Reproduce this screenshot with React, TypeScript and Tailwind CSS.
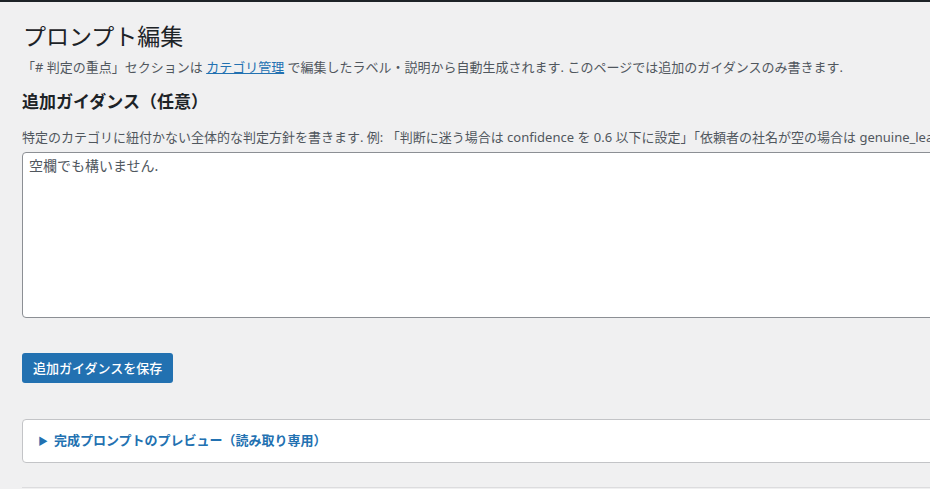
export default function App() {
  return (
    <div
      className="min-h-[489px] bg-[#f0f0f1] text-[#3c434a] overflow-hidden"
      style={{ fontFamily: '"Noto Sans", "Noto Sans CJK JP", sans-serif' }}
    >
      <div className="h-[2px] bg-[#1d2327]" />
      <div className="pl-[22px] w-[1100px]">
        <h1 className="mt-[19px] text-[23px] leading-[30px] font-normal text-[#1d2327] pl-px">プロンプト編集</h1>
        <p className="mt-[6px] text-[13px] leading-[20px] text-[#50575e] whitespace-nowrap">
          「# 判定の重点」セクションは{' '}
          <a href="#" className="text-[#2271b1] underline">
            カテゴリ管理
          </a>{' '}
          で編集したラベル・説明から自動生成されます. このページでは追加のガイダンスのみ書きます.
        </p>
        <h2 className="mt-[14px] text-[17px] leading-[22px] font-semibold text-[#1d2327]">追加ガイダンス（任意）</h2>
        <p className="mt-[14px] text-[13px] leading-[20px] text-[#50575e] whitespace-nowrap">
          特定のカテゴリに紐付かない全体的な判定方針を書きます. 例: 「判断に迷う場合は confidence を 0.6 以下に設定」「依頼者の社名が空の場合は genuine_lead を false にする」
        </p>
        <textarea
          className="mt-[5px] block w-[1000px] h-[166px] bg-white border border-[#8c8f94] rounded-[4px] px-[6px] py-[3px] text-[14px] leading-[20px] text-[#2c3338] placeholder:text-[#50575e] resize-none outline-none"
          placeholder="空欄でも構いません."
        />
        <button className="mt-[35px] h-[30px] px-[11px] rounded-[3px] bg-[#2271b1] text-white text-[13px] leading-[28px] font-medium">
          追加ガイダンスを保存
        </button>
        <details className="mt-[36px] w-[1000px] bg-white border border-[#c3c4c7] rounded-[4px]">
          <summary className="list-none h-[42px] flex items-center pl-[15px] text-[13px] font-semibold text-[#2271b1] cursor-pointer">
            <span className="text-[10px] mr-[6px]">▶</span>
            完成プロンプトのプレビュー（読み取り専用）
          </summary>
        </details>
        <div className="mt-[24px] h-px w-[1000px] bg-[#dcdcde]" />
      </div>
    </div>
  );
}
